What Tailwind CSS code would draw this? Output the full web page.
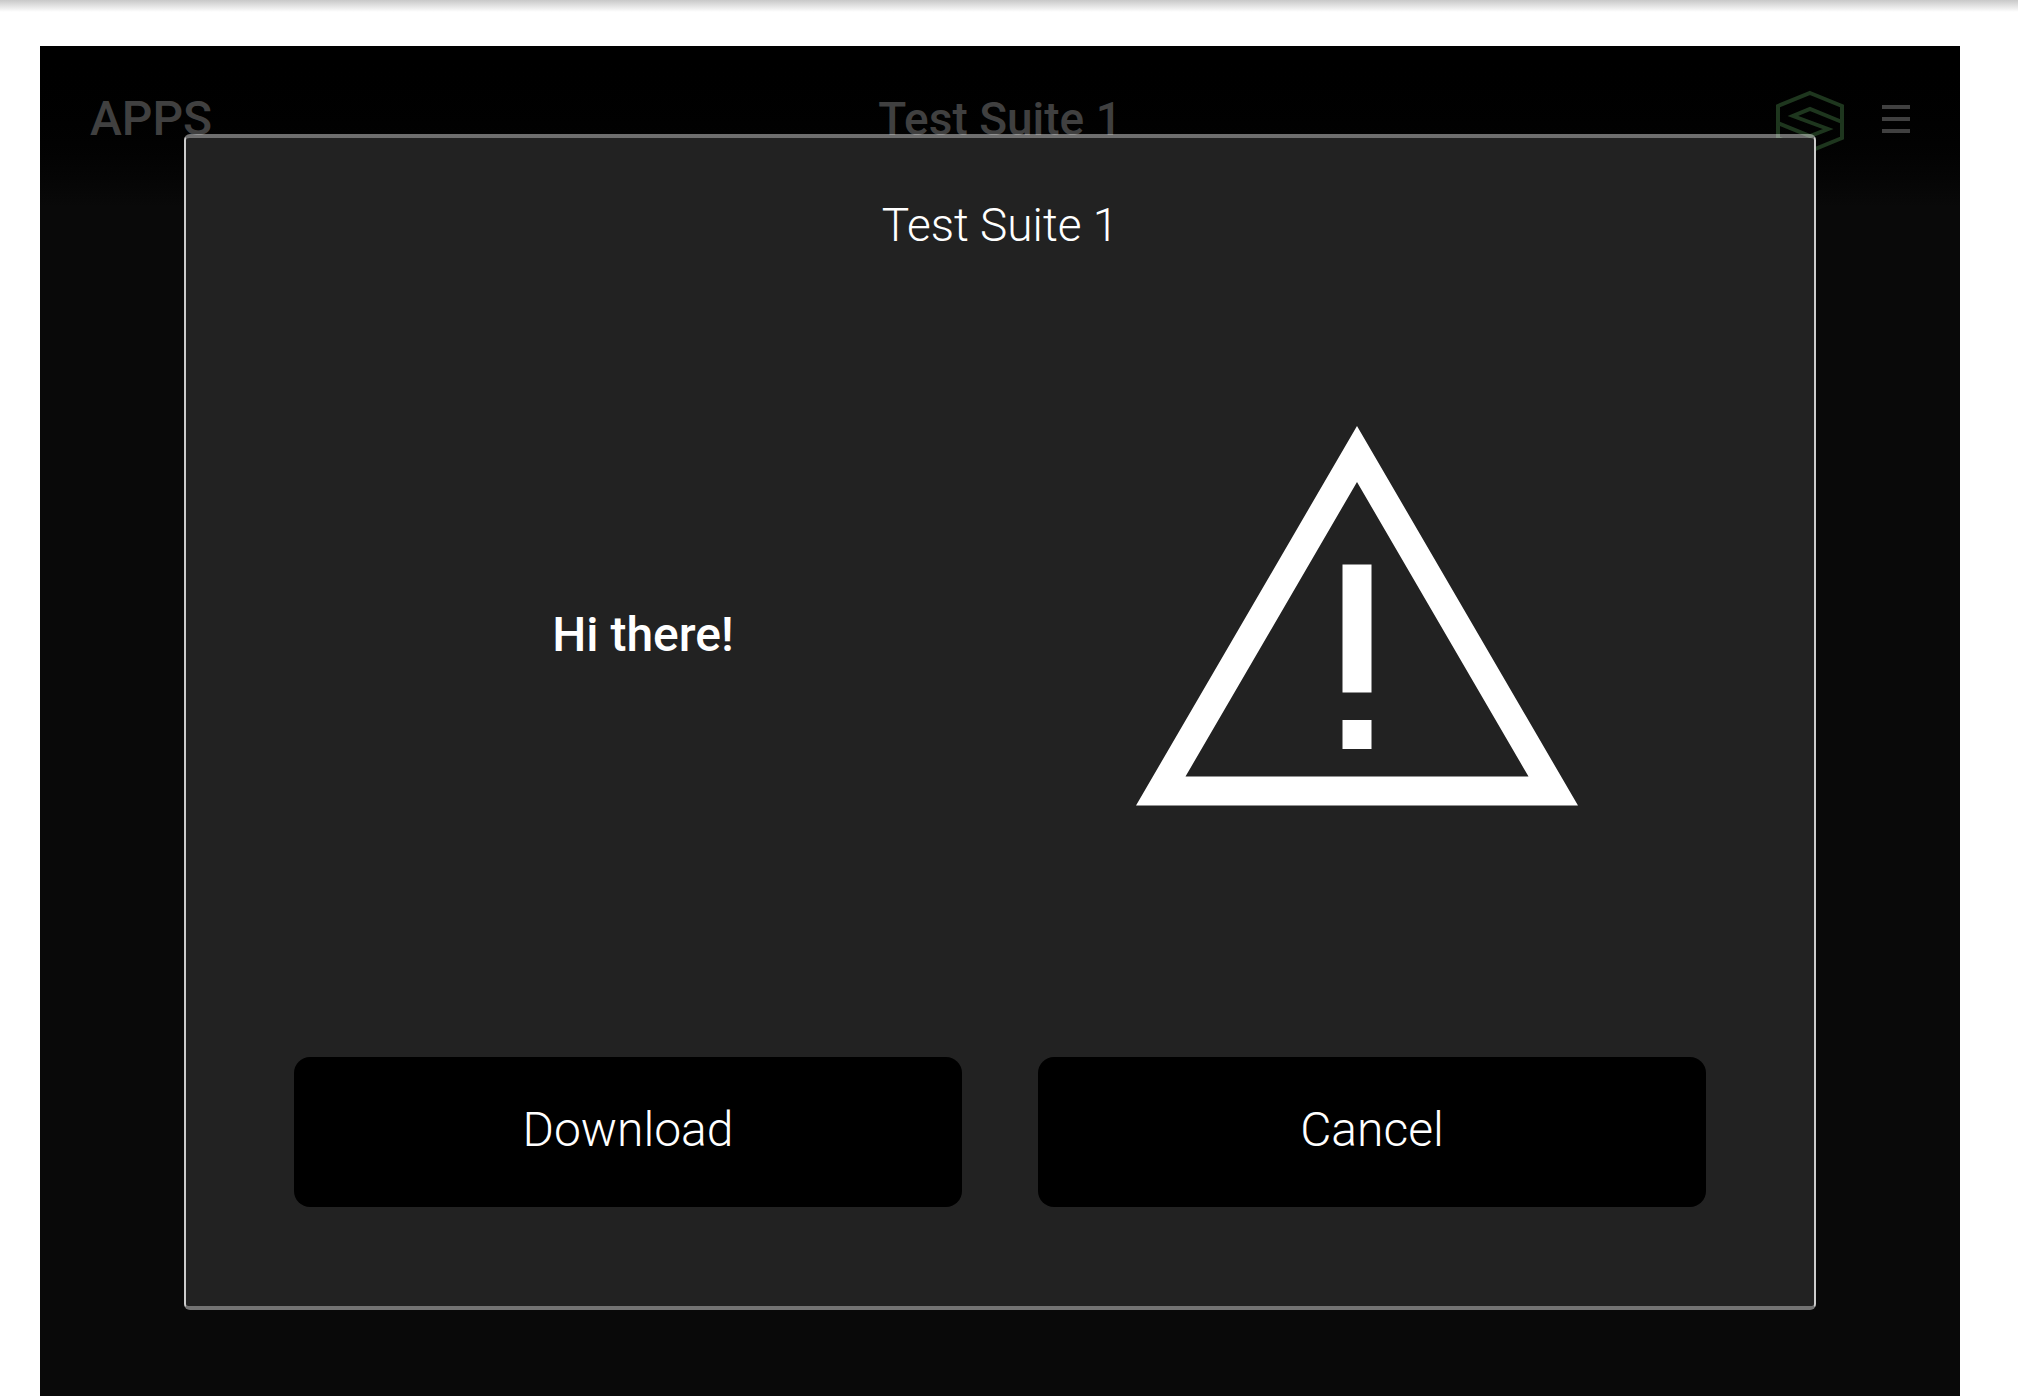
<!DOCTYPE html>
<html lang="en">
<head>
<meta charset="utf-8">
<meta name="viewport" content="width=device-width, initial-scale=1">
<title>Test Suite 1</title>
<script src="https://cdn.jsdelivr.net/npm/@tailwindcss/browser@4"></script>
</head>
<body class="flex min-h-screen flex-col bg-white font-[Roboto,sans-serif]">
  <div class="h-3 bg-linear-to-b from-[#c8c8c8] to-white"></div>
  <main class="mt-[34px] mr-[58px] mb-1 ml-10 grid flex-1 grid-cols-1 grid-rows-1 bg-linear-to-b from-black to-[#090909] to-[160px]">
    <!-- App bar, dimmed behind the dialog -->
    <header class="col-start-1 row-start-1 grid h-[146px] grid-cols-[1fr_auto_1fr] items-center self-start px-[50px] leading-14 font-medium text-[#404040]">
      <a href="#" class="justify-self-start text-5xl leading-14">APPS</a>
      <h1 class="text-[46px]">Test Suite 1</h1>
      <div class="flex items-center gap-[38px] justify-self-end">
        <svg class="h-[70px] w-[68px]" viewBox="0 0 68 70" fill="none" stroke="#1e361e" stroke-width="4" aria-hidden="true">
          <path d="M34 9 66 22V54L34 67 2 54V22Z"/>
          <path d="M66 38 34 25 17 32 52 45 34 52 2 39"/>
        </svg>
        <button type="button" aria-label="Menu" class="flex flex-col gap-2">
          <span class="h-1 w-7 bg-[#404040]"></span>
          <span class="h-1 w-7 bg-[#404040]"></span>
          <span class="h-1 w-7 bg-[#404040]"></span>
        </button>
      </div>
    </header>

    <section role="dialog" aria-labelledby="dialog-title" class="z-10 col-start-1 row-start-1 mx-36 mt-[88px] mb-[86px] flex flex-col rounded-md border-x-2 border-y-4 border-x-[#ccc] border-y-white/43 bg-[#222] bg-clip-padding pt-[59px] pb-[99px] text-white">
      <h2 id="dialog-title" class="text-center text-[46px] leading-14 font-light">Test Suite 1</h2>
      <div class="grid flex-1 grid-cols-2 items-center justify-items-center px-[100px]">
        <p class="text-5xl leading-14 font-medium">Hi there!</p>
        <svg class="h-[418px] w-[442px]" viewBox="0 0 442 418" fill="#fff" role="img" aria-label="Warning">
          <path fill-rule="evenodd" d="M221 0 442 379.500H0ZM221 56 49.500 350.500H392.500Z"/>
          <path d="M206.500 138.500h29v128h-29ZM206.500 294h29v29h-29Z"/>
        </svg>
      </div>
      <div class="mt-10 grid grid-cols-2 gap-[76px] px-[108px] text-5xl leading-14 font-light">
        <button type="button" class="h-[150px] rounded-2xl bg-black pb-1">Download</button>
        <button type="button" class="h-[150px] rounded-2xl bg-black pb-1">Cancel</button>
      </div>
    </section>
  </main>
</body>
</html>
